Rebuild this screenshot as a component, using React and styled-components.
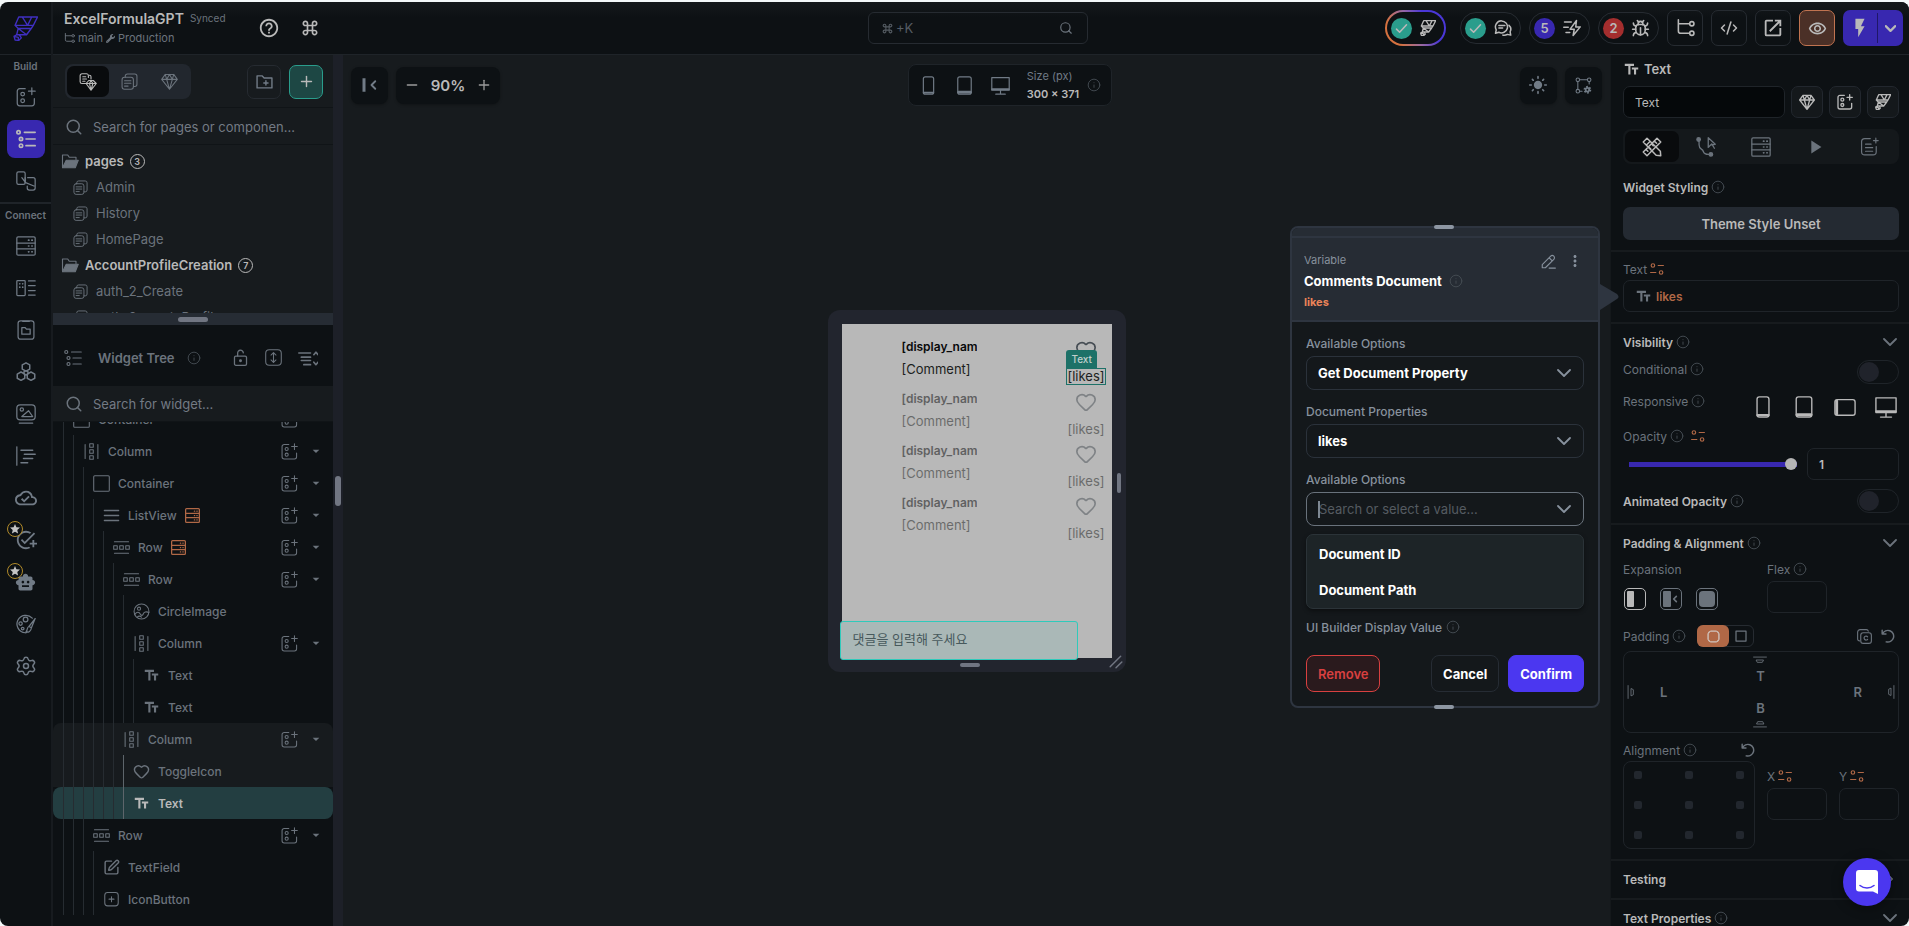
import React, { useState } from 'react';
import styled, { createGlobalStyle, css } from 'styled-components';
import { Bug, ChevronRight, CodeXml, Heart, Info, Minus, Plus, Search, SquarePen } from 'lucide-react';
import {
  MdAddTask,
  MdArrowDropDown,
  MdFlashOn,
  MdHelpOutline,
  MdKeyboardCommandKey,
  MdLightMode,
  MdMoreVert,
  MdOpenInNew,
  MdOutlineCloudDone,
  MdOutlineRemoveRedEye,
  MdPlayArrow,
  MdSmartToy,
  MdStar,
  MdTextFields,
} from 'react-icons/md';
import { FaWrench } from 'react-icons/fa';

const c = {
  base: '#0d1114',
  raised: '#171b1e',
  border: '#1f2429',
  line: '#262b31',
  slate: '#262c34',
  muted: '#6b737c',
  light: '#b9b9b9',
  purple: '#3828b0',
  teal: '#2a9d8c',
  orange: '#b06846',
};

const GlobalStyle = createGlobalStyle`
  * { box-sizing: border-box; }
  body {
    margin: 0;
    background: #f3f8f9;
    color: ${c.muted};
    font-family: Inter, "Noto Sans CJK KR", sans-serif;
    font-size: 13px;
    overflow: hidden;
  }
  button, input, select { font: inherit; color: inherit; margin: 0; }
  button { cursor: pointer; padding: 0; border: none; background: none; }
  a { color: inherit; text-decoration: none; }
  ul { list-style: none; margin: 0; padding: 0; }
  svg { display: block; flex: none; }
`;

/* ---------- Icons ---------- */

const Svg = ({ size = 20, box = 24, sw = 1.5, children, ...rest }) => (
  <svg
    width={size}
    height={size}
    viewBox={`0 0 ${box} ${box}`}
    fill="none"
    stroke="currentColor"
    strokeWidth={sw}
    strokeLinecap="round"
    strokeLinejoin="round"
    aria-hidden="true"
    {...rest}
  >
    {children}
  </svg>
);

const FlowLogo = (props) => (
  <Svg sw={1.3} {...props}>
    <path d="M5.500 1H23.500l-4 8H2zM9 1l5 8 4-8M2 9l3 3h12.500l2-3M5 12l-1.500 6H13l4.500-6M5 12l8 6M3.500 18 1 19.500l1 3.500 3.500.5L8 21l-2-3M1 19.500l4 1 .5 3" />
  </Svg>
);
const AddWidgetIcon = (props) => (
  <Svg {...props}>
    <path d="M11 2H4.500A3 3 0 0 0 1.500 5v14.500a3 3 0 0 0 3 3H19a3 3 0 0 0 3-3V14M19 1v8M15 5h8" />
    <circle cx="8" cy="8.500" r="2.200" />
    <circle cx="8" cy="16.500" r="2.200" />
  </Svg>
);
const TreeIcon = (props) => (
  <Svg sw={2} {...props}>
    <circle cx="3" cy="4" r="2" />
    <circle cx="6" cy="12" r="2" />
    <circle cx="6" cy="20" r="2" />
    <path d="M10 4h13M12 12h11M12 20h11" />
  </Svg>
);
const StoryboardIcon = (props) => (
  <Svg {...props}>
    <rect x="1" y="1" width="10" height="15" rx="2" />
    <path d="M14 8h6.500A2.500 2.500 0 0 1 23 10.500v10a2.500 2.500 0 0 1-2.500 2.500H16a2.500 2.500 0 0 1-2.500-2.500V18M7 8l4.500 6 10 4M11 8v6" />
  </Svg>
);
const DatabaseIcon = (props) => (
  <Svg {...props}>
    <rect x="1" y="1" width="22" height="22" rx="1.500" />
    <path d="M1 8.500h22M1 15.500h22" />
    <path d="M15 5h.5M19 5h.5M15 12h.5M19 12h.5M15 19h.5M19 19h.5" strokeWidth="2" />
  </Svg>
);
const DataTypeIcon = (props) => (
  <Svg {...props}>
    <rect x="1" y="3" width="10" height="18" rx="1" />
    <path d="M4.500 7h.1M8 7h.1M4.500 11h.1M8 11h.1" strokeWidth="2" />
    <path d="M15 3.500h8M15 9h8M15 15h8M15 20.500h8" />
  </Svg>
);
const ClipboardIcon = (props) => (
  <Svg {...props}>
    <rect x="2.500" y="1" width="19" height="22" rx="3" />
    <path d="M8 1.500h8M7 9h4l1.500 2H17v6H7z" />
  </Svg>
);
const ApiIcon = (props) => (
  <Svg sw={1.800} {...props}>
    <path d="m12 1 4.500 2.500v5L12 11 7.500 8.500v-5zM6 12l4.500 2.500v5L6 22l-4.500-2.500v-5zM18 12l-4.500 2.500v5L18 22l4.500-2.500v-5z" />
    <circle cx="12" cy="13" r="2.500" />
  </Svg>
);
const MediaIcon = (props) => (
  <Svg {...props}>
    <rect x="1" y="1" width="22" height="18" rx="4" />
    <circle cx="7" cy="6.500" r="2" />
    <path d="m7 15 8-7 5 7zM4 23h16" />
  </Svg>
);
const CodeLinesIcon = (props) => (
  <Svg {...props}>
    <path d="M1 1v22" />
    <path d="M6 5h14M10 10h13M9 15h11M6 20h8" strokeWidth="1.800" />
  </Svg>
);
const PaletteIcon = (props) => (
  <Svg {...props}>
    <path d="M19.500 5A10.500 10.500 0 1 0 11 22.500c2 0 2.500-1 2-2.500M23 5.500l-4.500 11-3-1.500zM15.500 15c-2.500.5-1.500 4.500-3.500 6.500 3 1 6-1 6.500-5" />
    <circle cx="11.500" cy="6.500" r="2.800" />
    <circle cx="5.500" cy="11.500" r="2" />
    <circle cx="8" cy="17.500" r="1.600" />
  </Svg>
);
const GearIcon = (props) => (
  <Svg sw={1.800} {...props}>
    <path d="M9.500 3.500C10 1 14 1 14.500 3.500c.5 2 2 2.800 3.800 2C21 4.500 23.500 7.500 21.500 9.500c-1.500 1.500-1.500 3.500 0 5 2 2-.5 5-3.200 4-1.800-.8-3.300 0-3.800 2-.5 2.500-4.500 2.500-5 0-.5-2-2-2.800-3.800-2-2.700 1-5.200-2-3.200-4 1.500-1.500 1.500-3.500 0-5-2-2 .5-5 3.200-4 1.800.8 3.300 0 3.800-2z" />
    <circle cx="12" cy="12" r="3" />
  </Svg>
);
const PagesIcon = (props) => (
  <Svg {...props}>
    <rect x="1.500" y="6" width="16" height="17" rx="3.500" />
    <path d="M6 6V4.500A3 3 0 0 1 9 1.500h10.500a3 3 0 0 1 3 3V16a3 3 0 0 1-3 3h-2M5 11h9M5 14.500h9M5 18.500h5" />
  </Svg>
);
const GemIcon = (props) => (
  <Svg {...props}>
    <path d="M6 2h12l5 7-11 14L1 9zM1 9h22M8 9l4 14 4-14-4-7zM6 2l2 7M18 2l-2 7" />
  </Svg>
);
const PagesGemIcon = (props) => (
  <Svg {...props}>
    <path d="M9 14H4a2.500 2.500 0 0 1-2.500-2.500v-8A2.500 2.500 0 0 1 4 1h6a2.500 2.500 0 0 1 2.500 2.500V6M5 5h4M5 8h5M5 11h3M14 3a2 2 0 0 1 2 2v3" />
    <path d="M13 10h6l4 4-7 9-6.500-9zM9.500 14H23M14 14l2 9 2.500-9-2.500-4z" />
  </Svg>
);
const FolderPlusIcon = (props) => (
  <Svg {...props}>
    <path d="M1.500 4h7l3 3h11v14h-21zM14 11v6M11 14h6" />
  </Svg>
);
const FolderIcon = (props) => (
  <Svg {...props}>
    <path d="M2 20V4h7l2 3h9v3" />
    <path d="M7 11h16l-4 10H2z" fill="currentColor" />
  </Svg>
);
const LockIcon = (props) => (
  <Svg sw={1.800} {...props}>
    <rect x="3.500" y="10" width="17" height="13" rx="2" />
    <path d="M8 10V6a4 4 0 0 1 8-.5" />
    <circle cx="12" cy="16.500" r="1.200" fill="currentColor" />
  </Svg>
);
const ExpandIcon = (props) => (
  <Svg {...props}>
    <rect x="1" y="1" width="22" height="22" rx="5" />
    <path d="M12 5v14M8.500 8.500 12 5l3.500 3.500M8.500 15.500 12 19l3.500-3.500" />
  </Svg>
);
const CollapseIcon = (props) => (
  <Svg sw={2} {...props}>
    <path d="M1 6h14M4 11h11M4 15h11M7 20h8M19 8l2.500-3L24 8M19 17l2.500 3 2.500-3" />
  </Svg>
);
const ColumnIcon = (props) => (
  <Svg {...props}>
    <path d="M3 2v20M21 2v20" />
    <path d="M9.500 1h5v5h-5zM9.500 9.500h5v5h-5zM9.500 18h5v5h-5z" />
  </Svg>
);
const RowIcon = (props) => (
  <Svg {...props}>
    <path d="M2 4h20M2 20h20" />
    <path d="M1 9.500h5v5H1zM9.500 9.500h5v5h-5zM18 9.500h5v5h-5z" />
  </Svg>
);
const ContainerIcon = (props) => (
  <Svg {...props}>
    <rect x="1" y="1" width="22" height="22" rx="1.500" />
  </Svg>
);
const ListIcon = (props) => (
  <Svg sw={2} {...props}>
    <path d="M2 5h20M2 12h20M2 19h20" />
  </Svg>
);
const CircleImageIcon = (props) => (
  <Svg {...props}>
    <circle cx="12" cy="12" r="10.500" />
    <circle cx="8.500" cy="8" r="2.200" />
    <path d="M2.500 16c3-4 6-4 8 0 1 2 3 2 4-.5s4-4 8-2M6 20c2-2 4-2 6 0" />
  </Svg>
);
const BoxPlusIcon = (props) => (
  <Svg {...props}>
    <rect x="2.500" y="2" width="19" height="19" rx="4" />
    <path d="M12 8v7M8.500 11.500h7" />
  </Svg>
);
const HeartIcon = (props) => <Heart {...props} strokeWidth={2} />;
const EditBoxIcon = (props) => <SquarePen {...props} strokeWidth={2} />;
const BranchIcon = (props) => (
  <Svg {...props}>
    <path d="M3 1v14a3 3 0 0 0 3 3h11M3 6h14" />
    <circle cx="20" cy="6" r="2.700" />
    <circle cx="20" cy="18" r="2.700" />
  </Svg>
);
const ChatIcon = (props) => (
  <Svg sw={2} {...props}>
    <path d="M10 2.500a8 8 0 1 1-3.500 15.200L2 19l1-4.500A8 8 0 0 1 10 2.500zM6.500 8.500h8M6.500 12h5" />
    <path d="M20 8.500a7 7 0 0 1 1.500 8.500l.8 4.500-4.500-1a8 8 0 0 1-6 1" />
  </Svg>
);
const SpeedBoltIcon = (props) => (
  <Svg sw={2} {...props}>
    <path d="M18 2 9.500 13.500H15L13.500 22 23 10.500h-6zM2 4h9M1 11h6M4 18h5" />
  </Svg>
);
const CollapseLeftIcon = (props) => (
  <Svg {...props}>
    <path d="M4 3v18" strokeWidth="4" strokeLinecap="butt" />
    <path d="m19 7-5 5 5 5" strokeWidth="2.500" />
  </Svg>
);
const PhoneIcon = (props) => (
  <Svg {...props}>
    <rect x="5.500" y="1" width="13" height="22" rx="2.500" />
    <path d="M6 21h12" strokeWidth="2.500" />
  </Svg>
);
const TabletIcon = (props) => (
  <Svg {...props}>
    <rect x="3.500" y="1" width="17" height="22" rx="2.500" />
    <path d="M4.500 20.500h15" strokeWidth="3.500" />
  </Svg>
);
const LandscapeIcon = (props) => (
  <Svg {...props}>
    <rect x="1" y="4" width="22" height="17" rx="2.500" />
    <path d="M3 5.500v14" strokeWidth="3" />
  </Svg>
);
const DesktopIcon = (props) => (
  <Svg {...props}>
    <path d="M1 2h22v16H1zM12 18v4M6 23h12" />
    <path d="M1.500 16.800h21" strokeWidth="2.500" />
  </Svg>
);
const NodesIcon = (props) => (
  <Svg {...props}>
    <circle cx="4" cy="4" r="2.500" />
    <circle cx="20" cy="4" r="2.500" />
    <circle cx="4" cy="20" r="2.500" />
    <path d="M6.500 4h11M4 6.500v11M20 6.500V10M6.500 20H10" />
    <circle cx="17.500" cy="18" r="4" strokeDasharray="2.200 2" strokeLinecap="butt" strokeWidth="3" />
    <circle cx="17.500" cy="18" r="2.500" strokeWidth="2.500" />
  </Svg>
);
const ToolsIcon = (props) => (
  <Svg sw={1.8} {...props}>
    <path d="m1.500 6 4.500-4.500L22 17l.5 5.500-5.500-.5zM22.500 6 18 1.500 1.500 18 6 22.500zM6 9l3-3M15 5l2.500 2.500M11.500 8.500l2 2M8 12l2.500 2.500M5 15l2 2" />
  </Svg>
);
const ActionsIcon = (props) => (
  <Svg {...props}>
    <circle cx="3" cy="4" r="2" fill="currentColor" />
    <circle cx="17" cy="21" r="2" fill="currentColor" />
    <path d="M3.500 6v4c0 6 4 4 5 8 .5 2 2 3 6 3M14 2v11l3-3 5-.5zM18 9l3 5" />
  </Svg>
);
const NoteIcon = (props) => (
  <Svg {...props}>
    <path d="M13 2H6a4 4 0 0 0-4 4v12.500a4 4 0 0 0 4 4h10.500a4 4 0 0 0 4-4V12M20 1.500v6M17 4.500h6M7 9h7M7 13.500h9M7 18h9" />
  </Svg>
);
const BindIcon = (props) => (
  <Svg sw={2} {...props}>
    <circle cx="5" cy="6" r="3" />
    <circle cx="19" cy="18" r="3" />
    <path d="M14 6h9M1 18h9" />
  </Svg>
);
const CopyIcon = (props) => (
  <Svg sw={1.800} {...props}>
    <rect x="6" y="6" width="17" height="17" rx="4" />
    <path d="M4 19a3 3 0 0 1-3-3V5a4 4 0 0 1 4-4h10a3 3 0 0 1 3 2.500M17 12.500a3.200 3.200 0 1 0 0 4" />
  </Svg>
);
const EdgeIcon = (props) => (
  <Svg size={14} {...props}>
    <path d="M1 7h22M6 12h12l-2 4H8z" />
  </Svg>
);
const PencilIcon = (props) => (
  <Svg {...props}>
    <path d="M2 22v-5L15.500 3.500a3.500 3.500 0 0 1 5 5L7 22zM13 6l5 5M13 22.500h10" />
  </Svg>
);
const UndoIcon = () => (
  <Svg size={14} sw={2.500}>
    <path d="M2 2v6.500h6.500M2.500 8.500A10 10 0 1 1 9 22" />
  </Svg>
);
const Chevron = (props) => (
  <Svg size={14} box={14} sw={1.800} {...props}>
    <path d="m1 4 6 6 6-6" />
  </Svg>
);
const Check = () => (
  <Svg size={15} sw={2.5}>
    <path d="m4 13 5 5L20 6" />
  </Svg>
);
const MessengerIcon = () => (
  <svg width="22" height="24" viewBox="0 0 22 24" aria-hidden="true">
    <path d="M3 0h16a3 3 0 0 1 3 3v21l-5-2.500H3a3 3 0 0 1-3-3V3a3 3 0 0 1 3-3z" fill="#fff" />
    <path d="M4 15.500c4 3.300 10 3.300 14 0" fill="none" stroke="#4b37f0" strokeWidth="1.600" strokeLinecap="round" />
  </svg>
);

/* ---------- Page shell ---------- */

const Shell = styled.div`
  display: flex;
  margin-top: 2px;
  height: calc(100vh - 2px);
  background: ${c.base};
  border-radius: 8px;
  overflow: hidden;
`;

const Main = styled.div`
  flex: 1;
  min-width: 0;
  display: flex;
  flex-direction: column;
`;

const Workspace = styled.div`
  flex: 1;
  min-height: 0;
  display: flex;
`;

/* ---------- Rail ---------- */

const Rail = styled.nav`
  width: 53px;
  flex: none;
  border-right: 2px solid #171b1f;
`;

const LogoLink = styled.a`
  height: 53px;
  display: grid;
  place-items: center;
  color: #3f2fc0;
  border-bottom: 1px solid ${c.border};
`;

const RailGroup = styled.section`
  display: flex;
  flex-direction: column;
  align-items: center;
  gap: 4px;
  padding: 3px 0 2px;
  & + & {
    border-top: 2px solid ${c.border};
  }
`;

const RailTitle = styled.h2`
  margin: 0;
  font-size: 10px;
  line-height: 16px;
  font-weight: 600;
`;

const RailItem = styled.button`
  position: relative;
  width: 38px;
  height: 38px;
  display: grid;
  place-items: center;
  border-radius: 8px;
  background: ${({ $active }) => ($active ? c.purple : 'transparent')};
  color: ${({ $active }) => ($active ? c.light : '#717b86')};
`;

const StarBadge = styled.span`
  position: absolute;
  left: 0;
  top: 0;
  width: 16px;
  height: 16px;
  display: grid;
  place-items: center;
  border: 1px solid #b08a2a;
  border-radius: 50%;
  background: ${c.base};
  color: #c4c4c4;
`;

/* ---------- Top bar ---------- */

const TopBar = styled.header`
  height: 53px;
  flex: none;
  display: grid;
  grid-template-columns: 1fr 220px 1fr;
  align-items: center;
  padding-right: 6px;
  background: linear-gradient(#14181b, ${c.base} 16px);
  border-bottom: 1px solid ${c.border};
`;

const ProjectArea = styled.div`
  display: flex;
  align-items: center;
  gap: 20px;
  padding-left: 11px;
  color: ${c.light};
`;

const Project = styled.div`
  width: 174px;
  color: ${c.muted};
`;

const ProjectLine = styled.div`
  display: flex;
  align-items: center;
  gap: ${({ $gap }) => $gap}px;
  height: 20px;
  font-size: ${({ $size }) => $size}px;
  white-space: nowrap;
`;

const ProjectName = styled.h1`
  margin: 0;
  font-size: 14px;
  font-weight: 600;
  color: ${c.light};
`;

const CommandSearch = styled.label`
  display: flex;
  align-items: center;
  gap: 2px;
  height: 32px;
  padding: 0 14px 0 12px;
  border: 1px solid ${c.line};
  border-radius: 6px;
`;

const BareInput = styled.input`
  flex: 1;
  min-width: 0;
  padding: 0;
  border: none;
  outline: none;
  background: none;
  color: ${c.light};
  text-overflow: ellipsis;
  &::placeholder {
    color: ${({ $hint }) => $hint || '#737a84'};
    opacity: 1;
  }
`;

const TopActions = styled.div`
  display: flex;
  align-items: center;
  justify-content: flex-end;
  gap: 8px;
  color: ${c.light};
`;

const Pill = styled.button`
  display: flex;
  align-items: center;
  justify-content: space-between;
  width: 61px;
  height: 32px;
  padding: 0 8px 0 4px;
  border: 1px solid ${c.line};
  border-radius: 16px;
  ${({ $glow }) =>
    $glow &&
    css`
      height: 36px;
      margin-right: 6px;
      border: 2px solid transparent;
      border-radius: 18px;
      background: linear-gradient(${c.base}, ${c.base}) padding-box,
        linear-gradient(60deg, #d5713f 20%, #9a6aa0 45%, #4a37d8 70%) border-box;
    `}
`;

const Count = styled.span`
  width: 21px;
  height: 21px;
  display: grid;
  place-items: center;
  border-radius: 50%;
  background: ${({ $color }) => $color};
  font-weight: 600;
`;

const SquareButton = styled.button`
  width: 36px;
  height: 36px;
  flex: none;
  display: grid;
  place-items: center;
  border: 1px solid ${({ $active }) => ($active ? '#c07350' : c.line)};
  border-radius: 7px;
  background: ${({ $active }) => ($active ? '#4b3027' : 'transparent')};
`;

const RunGroup = styled.div`
  display: flex;
  height: 36px;
  border-radius: 7px;
  background: ${c.purple};
`;

const RunButton = styled.button`
  width: ${({ $width }) => $width}px;
  margin: 3px 0;
  display: grid;
  place-items: center;
  & + & {
    border-left: 1px solid #1f1768;
  }
`;

/* ---------- Left panel ---------- */

const LeftPanel = styled.aside`
  width: 280px;
  flex: none;
  display: flex;
  flex-direction: column;
`;

const PagesPane = styled.section`
  height: 258px;
  flex: none;
  background: ${c.raised};
  overflow: hidden;
`;

const PagesHeader = styled.div`
  display: flex;
  align-items: center;
  gap: 8px;
  height: 53px;
  padding: 1px 10px 0 12px;
  border-bottom: 1px solid #101417;
`;

const Segmented = styled.div`
  display: flex;
  height: 35px;
  margin-right: auto;
  padding: 2px;
  border-radius: 8px;
  background: #22272e;
`;

const Segment = styled.button`
  width: ${({ $active }) => ($active ? 42 : 40)}px;
  display: grid;
  place-items: center;
  border-radius: 7px;
  background: ${({ $active }) => ($active ? '#090b0d' : 'transparent')};
  color: ${({ $active }) => ($active ? c.light : c.muted)};
`;

const ToolButton = styled.button`
  width: 34px;
  height: 34px;
  display: grid;
  place-items: center;
  border: 1px solid ${({ $accent }) => ($accent ? c.teal : c.line)};
  border-radius: 7px;
  background: ${({ $accent }) => ($accent ? '#1d4744' : 'transparent')};
  color: ${({ $accent }) => ($accent ? c.light : '#717b86')};
`;

const SearchRow = styled.label`
  display: flex;
  align-items: center;
  gap: 10px;
  height: ${({ $height }) => $height}px;
  flex: none;
  padding: 1px 32px 0 12px;
  background: ${c.raised};
  border-bottom: 1px solid #101417;
`;

const PageList = styled.ul`
  padding-top: 3px;
`;

const PageRow = styled.li`
  display: flex;
  align-items: center;
  height: 26px;
  gap: ${({ $folder }) => ($folder ? 6 : 8)}px;
  padding-left: ${({ $folder }) => ($folder ? 8 : 20)}px;
  font-weight: ${({ $folder }) => ($folder ? 600 : 400)};
  white-space: nowrap;
`;

const FolderName = styled.span`
  color: ${c.light};
`;

const PageCount = styled.span`
  width: 15px;
  height: 15px;
  display: grid;
  place-items: center;
  border: 1px solid ${c.light};
  border-radius: 50%;
  color: ${c.light};
  font-size: 9px;
`;

const Splitter = styled.div`
  height: 12px;
  flex: none;
  display: grid;
  place-items: center;
  background: ${c.slate};
`;

const Grip = styled.span`
  width: ${({ $w }) => $w}px;
  height: ${({ $h }) => $h}px;
  border-radius: 3px;
  background: ${({ $color }) => $color || '#717682'};
`;

const TreeHeader = styled.div`
  display: flex;
  align-items: center;
  height: 61px;
  flex: none;
  padding: 4px 15px 0 11px;
  gap: 16px;
`;

const TreeTitle = styled.h2`
  display: flex;
  align-items: center;
  gap: 12px;
  margin: 0 auto 0 0;
  font-size: 13px;
  font-weight: 600;
`;

const TreeViewport = styled.div`
  flex: 1;
  min-height: 0;
  overflow: hidden;
  & > ul {
    margin-top: -19px;
  }
`;

const TreeRow = styled.li`
  display: flex;
  align-items: center;
  height: 32px;
  padding: 0 9px 0 10px;
  font-size: 12px;
  font-weight: 500;
  white-space: nowrap;
  ${({ $group }) => $group && `background: ${c.raised};`}
  ${({ $first }) => $first && 'border-radius: 8px 8px 0 0;'}
  ${({ $selected }) =>
    $selected &&
    css`
      background: #233e41;
      border-radius: 8px;
      color: ${c.light};
      font-weight: 600;
    `}
`;

const Guide = styled.span`
  width: 10px;
  height: 32px;
  flex: none;
  border-left: 1px solid ${({ $bright }) => ($bright ? '#5d656b' : '#262c31')};
`;

const TreeLabel = styled.span`
  display: flex;
  align-items: center;
  gap: 8px;
  margin-right: auto;
`;

const TreeAction = styled.button`
  display: flex;
  align-items: center;
  gap: 10px;
`;

const DataMark = styled.span`
  color: ${c.orange};
`;

const Gutter = styled.div`
  width: 10px;
  flex: none;
  display: grid;
  place-items: center;
  background: #1d2028;
`;

/* ---------- Canvas ---------- */

const Canvas = styled.main`
  flex: 1;
  min-width: 0;
  display: grid;
  background: ${c.raised};
  & > * {
    grid-area: 1 / 1;
  }
`;

const CanvasTools = styled.div`
  align-self: start;
  display: flex;
  align-items: center;
  justify-content: space-between;
  padding: 9px 8px;
`;

const ToolGroup = styled.div`
  display: flex;
  gap: 8px;
`;

const Chip = styled.div`
  display: flex;
  align-items: center;
  justify-content: center;
  gap: 11px;
  min-width: ${({ $wide }) => ($wide ? 104 : 37)}px;
  height: 37px;
  border-radius: 8px;
  background: ${c.base};
  box-shadow: 0 1px 3px rgba(0, 0, 0, 0.3);
  color: #717b86;
`;

const ZoomButton = styled.button`
  color: #9a9a9a;
`;

const ZoomValue = styled.output`
  font-size: 15px;
  font-weight: 600;
  color: ${c.light};
`;

const DeviceBar = styled.div`
  display: flex;
  align-items: center;
  gap: 17px;
  height: 42px;
  padding: 0 10px;
  border: 1px solid ${c.border};
  border-radius: 8px;
  background: ${c.base};
  color: #717b86;
`;

const SizeInfo = styled.div`
  font-size: 11px;
  line-height: 18px;
  margin-right: -9px;
  strong {
    display: block;
    font-weight: 600;
    color: ${c.light};
  }
`;

const Frame = styled.div`
  place-self: center;
  position: relative;
  padding: 14px;
  border-radius: 12px;
  background: #22252e;
`;

const Screen = styled.div`
  display: flex;
  flex-direction: column;
  justify-content: space-between;
  width: 270px;
  height: 334px;
  background: #b8b8b8;
`;

const Comment = styled.div`
  display: flex;
  justify-content: space-between;
  height: 52px;
  padding: 0 7px 0 60px;
  font-size: 13px;
  color: #1c1e20;
  opacity: ${({ $faded }) => ($faded ? 0.5 : 1)};
`;

const CommentList = styled.div`
  padding-top: 11px;
`;

const CommentText = styled.div`
  width: 75px;
  overflow: hidden;
  line-height: 23px;
  white-space: nowrap;
  strong {
    display: block;
    font-weight: 600;
    font-size: 12px;
    color: #08090a;
  }
`;

const LikeColumn = styled.div`
  display: flex;
  flex-direction: column;
  align-items: center;
  justify-content: space-between;
  padding: 4px 0 2px;
  line-height: 15px;
`;

const SelectedWidget = styled.span`
  position: relative;
  margin-bottom: 1px;
  outline: 1px solid #1d7168;
`;

const WidgetTag = styled.span`
  position: absolute;
  left: -1px;
  bottom: 15px;
  padding: 0 5px;
  border-radius: 3px 3px 0 0;
  background: #1d7168;
  color: #c0cfcd;
  font-size: 10px;
  font-weight: 500;
  line-height: 19px;
`;

const CommentField = styled.input`
  width: 238px;
  height: 39px;
  margin: 0 0 -2px -2px;
  padding: 0 12px 2px;
  border: 1px solid #2fcabb;
  border-radius: 3px;
  background: #aab8b7;
  &::placeholder {
    color: #47595c;
    opacity: 1;
  }
`;

const SideGrip = styled(Grip)`
  position: absolute;
  right: 5px;
  top: 163px;
`;

const BottomGrip = styled(Grip)`
  position: absolute;
  left: 132px;
  bottom: 5px;
`;

const Corner = styled.span`
  position: absolute;
  right: 3px;
  bottom: 3px;
  color: #717682;
`;

/* ---------- Variable dialog ---------- */

const Dialog = styled.section`
  position: fixed;
  top: 226px;
  right: 309px;
  width: 310px;
  border: 2px solid #2e3540;
  border-radius: 8px;
  background: #14181b;
  color: #87919d;
`;

const DialogGrip = styled(Grip)`
  position: absolute;
  left: 142px;
  ${({ $edge }) => $edge}: -3px;
`;

const Pointer = styled.svg`
  position: absolute;
  left: 306px;
  top: 56px;
`;

const DialogHead = styled.header`
  display: flex;
  justify-content: space-between;
  height: 94px;
  padding: 22px 14px 0 12px;
  border-bottom: 2px solid #2e3540;
  border-radius: 6px 6px 0 0;
  background: linear-gradient(${c.slate} 8px, #2e3540 8px, #2e3540 10px, ${c.slate} 10px);
  font-size: 11px;
  line-height: 20px;
`;

const DialogTitle = styled.h2`
  display: flex;
  align-items: center;
  gap: 7px;
  margin: 0;
  height: 22px;
  font-size: 13px;
  font-weight: 700;
  color: #fff;
`;

const DialogValue = styled.div`
  font-weight: 700;
  color: #ea8459;
`;

const DialogTools = styled.div`
  display: flex;
  gap: 10px;
  height: 22px;
  align-items: center;
`;

const DialogBody = styled.form`
  padding: 10px 14px 14px;
`;

const FieldLabel = styled.label`
  display: flex;
  align-items: center;
  gap: 4px;
  height: 24px;
  padding-bottom: 2px;
  font-size: 12px;
  font-weight: 500;
`;

const SelectWrap = styled.div`
  position: relative;
  display: flex;
  align-items: center;
  height: 34px;
  margin-bottom: 10px;
  border: 1px solid ${({ $focused }) => ($focused ? '#69727c' : '#2b323b')};
  border-radius: 8px;
  & > svg {
    position: absolute;
    right: 12px;
    pointer-events: none;
  }
`;

const Select = styled.select`
  appearance: none;
  width: 100%;
  height: 100%;
  padding: 0 11px;
  border: none;
  outline: none;
  background: transparent;
  color: #fff;
  font-weight: 700;
  option {
    background: #14181b;
  }
`;

const Combo = styled(BareInput)`
  padding: 0 12px;
`;

const TextCaret = styled.span`
  position: absolute;
  left: 11px;
  width: 2px;
  height: 17px;
  background: #7e8893;
`;

const Menu = styled.ul`
  height: 75px;
  margin: -2px 0 7px;
  padding: 1px 0;
  border: 1px solid #2b3338;
  border-radius: 7px;
  background: #1d2427;
  box-shadow: 0 2px 4px rgba(0, 0, 0, 0.4);
`;

const MenuItem = styled.li`
  height: 36px;
  padding: 0 12px;
  line-height: 36px;
  font-weight: 700;
  color: #fff;
`;

const DialogActions = styled.div`
  display: flex;
  gap: 9px;
  margin-top: 15px;
`;

const ActionButton = styled.button`
  height: 37px;
  padding: 0 11px;
  border: 1px solid #262c34;
  border-radius: 8px;
  color: #fff;
  font-weight: 700;
  ${({ $kind }) =>
    $kind === 'danger' &&
    css`
      margin-right: auto;
      border-color: #d84040;
      background: #2a1a1d;
      color: #d84040;
      font-weight: 600;
    `}
  ${({ $kind }) =>
    $kind === 'primary' &&
    css`
      border-color: #4b37f0;
      background: #4b37f0;
    `}
`;

/* ---------- Properties panel ---------- */

const Properties = styled.aside`
  width: 299px;
  flex: none;
  border-left: 1px solid #14181b;
  overflow: hidden;
`;

const Section = styled.section`
  padding: ${({ $top }) => ($top === undefined ? 9 : $top)}px 10px 10px 12px;
  border-bottom: 2px solid ${c.raised};
`;

const Line = styled.div`
  display: flex;
  align-items: ${({ $align }) => $align || 'center'};
  gap: ${({ $gap }) => $gap || 0}px;
  height: ${({ $h }) => $h || 18}px;
  margin-top: ${({ $mt }) => $mt || 0}px;
`;

const SectionChevron = styled(Chevron)`
  margin-right: 2px;
`;

const PropTitle = styled.h3`
  display: flex;
  align-items: center;
  gap: 3px;
  margin: 0 auto 0 0;
  font-size: ${({ $small }) => ($small ? 12 : 13)}px;
  font-weight: 600;
  color: ${c.light};
`;

const PropLabel = styled.label`
  display: flex;
  align-items: center;
  gap: 3px;
  margin-right: ${({ $tight }) => ($tight ? '11px' : 'auto')};
  height: 18px;
  font-size: 12px;
  svg:nth-of-type(2) {
    margin-left: 4px;
  }
`;

const InputBox = styled.div`
  display: flex;
  align-items: center;
  gap: 4px;
  width: ${({ $w }) => ($w ? `${$w}px` : 'auto')};
  min-width: 0;
  flex: ${({ $w }) => ($w ? 'none' : 1)};
  height: 32px;
  padding: 0 11px;
  border: 1px solid ${c.border};
  border-radius: 7px;
  background: ${({ $dark }) => ($dark ? '#05080a' : 'transparent')};
`;

const BoundValue = styled(BareInput)`
  color: ${({ $color }) => $color || c.light};
  font-size: 12px;
  font-weight: ${({ $bold }) => ($bold ? 600 : 400)};
`;

const NameButton = styled(SquareButton)`
  width: 32px;
  height: 32px;
  border-color: #22272e;
  background: #14181b;
  color: ${c.light};
`;

const Tabs = styled.div`
  display: flex;
  height: 35px;
  margin-top: 11px;
  padding: 2px;
  border-radius: 8px;
  background: #14181b;
`;

const Tab = styled.button`
  flex: 1;
  display: grid;
  place-items: center;
  border-radius: 7px;
  background: ${({ $active }) => ($active ? '#090b0d' : 'transparent')};
  color: ${({ $active }) => ($active ? c.light : c.muted)};
`;

const ThemeButton = styled.button`
  width: 100%;
  height: 33px;
  margin-top: 11px;
  border-radius: 7px;
  background: #242a32;
  color: ${c.light};
  font-weight: 600;
`;

const Toggle = styled.input`
  appearance: none;
  width: 42px;
  height: 24px;
  padding: 1px;
  border: 1px solid ${c.border};
  border-radius: 12px;
  &::before {
    content: '';
    display: block;
    width: 20px;
    height: 20px;
    border-radius: 50%;
    background: #20232b;
  }
  &:checked::before {
    margin-left: auto;
    background: ${c.light};
  }
`;

const Devices = styled.div`
  display: flex;
  gap: 19px;
  padding: 4px 2px 0 0;
  color: ${c.light};
`;

const Slider = styled.input`
  appearance: none;
  flex: 1;
  min-width: 0;
  height: 12px;
  margin: 0 4px 0 6px;
  background: linear-gradient(${c.purple}, ${c.purple}) center / 100% 5px no-repeat;
  &::-webkit-slider-thumb {
    appearance: none;
    width: 12px;
    height: 12px;
    border-radius: 50%;
    background: #b5b5b5;
  }
`;

const HalfRow = styled.div`
  display: grid;
  grid-template-columns: 132px 60px 60px;
  column-gap: 12px;
`;

const Expansions = styled.div`
  display: flex;
  align-items: center;
  gap: 14px;
  height: 32px;
  padding: 4px 0 0 1px;
`;

const Expansion = styled.button`
  width: 22px;
  height: 22px;
  padding: 2px;
  display: flex;
  align-items: center;
  border: 1px solid currentColor;
  border-radius: 5px;
  color: ${({ $active }) => ($active ? c.light : c.muted)};
  &::before {
    content: '';
    width: ${({ $fill }) => $fill}px;
    height: 16px;
    border-radius: ${({ $fill }) => ($fill > 10 ? 4 : 1)}px;
    background: currentColor;
  }
`;

const PaddingMode = styled.div`
  display: flex;
  height: 22px;
  border: 1px solid ${c.line};
  border-radius: 6px;
`;

const ModeButton = styled.button`
  width: ${({ $active }) => ($active ? 32 : 27)}px;
  margin: -1px;
  display: grid;
  place-items: center;
  border-radius: 6px;
  background: ${({ $active }) => ($active ? c.orange : 'transparent')};
  color: ${({ $active }) => ($active ? '#d0c4be' : c.muted)};
`;

const IconButtons = styled.div`
  display: flex;
  align-items: center;
  gap: 9px;
  margin: 0 4px 0 auto;
`;

const PaddingBox = styled.div`
  display: flex;
  align-items: center;
  justify-content: space-between;
  height: 82px;
  margin-top: 4px;
  padding: 1px 0;
  border: 1px solid ${c.border};
  border-radius: 8px;
  font-weight: 600;
  font-size: 13px;
`;

const SideInput = styled.div`
  display: flex;
  align-items: center;
  gap: 22px;
`;

const MidInputs = styled.div`
  display: flex;
  flex-direction: column;
  align-items: center;
  height: 100%;
  line-height: 18px;
  span + span {
    margin-top: auto;
  }
`;

const AlignBox = styled.div`
  display: grid;
  grid-template-columns: repeat(3, 8px);
  justify-content: space-between;
  align-content: space-between;
  height: 88px;
  padding: 9px 10px;
  border: 1px solid ${c.border};
  border-radius: 8px;
`;

const AlignDot = styled.button`
  width: 8px;
  height: 8px;
  border-radius: 2px;
  background: #22272e;
`;

const ChatButton = styled.button`
  position: fixed;
  right: 18px;
  bottom: 20px;
  width: 48px;
  height: 48px;
  display: grid;
  place-items: center;
  border-radius: 50%;
  background: #4b37f0;
  box-shadow: 0 2px 12px rgba(0, 0, 0, 0.4);
`;

/* ---------- Data ---------- */

const buildItems = [
  { name: 'Widget palette', icon: AddWidgetIcon },
  { name: 'Widget tree', icon: TreeIcon },
  { name: 'Storyboard', icon: StoryboardIcon },
];

const connectItems = [
  { name: 'Firestore', icon: DatabaseIcon },
  { name: 'Data types', icon: DataTypeIcon },
  { name: 'App values', icon: ClipboardIcon },
  { name: 'API calls', icon: ApiIcon },
  { name: 'Media assets', icon: MediaIcon },
  { name: 'Custom code', icon: CodeLinesIcon },
  { name: 'Cloud functions', icon: MdOutlineCloudDone, size: 22 },
  { name: 'Tests', icon: MdAddTask, star: true, size: 22 },
  { name: 'Agents', icon: MdSmartToy, star: true, size: 21 },
  { name: 'Theme', icon: PaletteIcon },
  { name: 'Settings', icon: GearIcon },
];

const pages = [
  { name: 'pages', count: 3 },
  { name: 'Admin' },
  { name: 'History' },
  { name: 'HomePage' },
  { name: 'AccountProfileCreation', count: 7 },
  { name: 'auth_2_Create' },
  { name: 'auth_2_createProfile' },
];

const treeNodes = [
  { name: 'Container', icon: ContainerIcon, depth: 1, parent: true },
  { name: 'Column', icon: ColumnIcon, depth: 2, parent: true },
  { name: 'Container', icon: ContainerIcon, depth: 3, parent: true },
  { name: 'ListView', icon: ListIcon, depth: 4, parent: true, data: true },
  { name: 'Row', icon: RowIcon, depth: 5, parent: true, data: true },
  { name: 'Row', icon: RowIcon, depth: 6, parent: true },
  { name: 'CircleImage', icon: CircleImageIcon, depth: 7 },
  { name: 'Column', icon: ColumnIcon, depth: 7, parent: true },
  { name: 'Text', icon: MdTextFields, depth: 8 },
  { name: 'Text', icon: MdTextFields, depth: 8 },
  { name: 'Column', icon: ColumnIcon, depth: 6, parent: true, group: true, first: true },
  { name: 'ToggleIcon', icon: HeartIcon, depth: 7, group: true },
  { name: 'Text', icon: MdTextFields, depth: 7, group: true, selected: true },
  { name: 'Row', icon: RowIcon, depth: 3, parent: true },
  { name: 'TextField', icon: EditBoxIcon, depth: 4 },
  { name: 'IconButton', icon: BoxPlusIcon, depth: 4 },
];

const InfoMark = () => <Info size={14} strokeWidth={1.6} color="#454c53" />;

const RailButtons = ({ items, activeName }) =>
  items.map(({ name, icon: Icon, star, size = 20 }) => (
    <RailItem key={name} aria-label={name} $active={name === activeName}>
      <Icon size={size} />
      {star && (
        <StarBadge>
          <MdStar size={12} />
        </StarBadge>
      )}
    </RailItem>
  ));

const WidgetTree = () => (
  <ul>
    {treeNodes.map((node, i) => {
      const Icon = node.icon;
      return (
        <TreeRow key={i} $group={node.group} $first={node.first} $selected={node.selected}>
          {Array.from({ length: node.depth }, (_, g) => (
            <Guide key={g} $bright={node.group && g === 6} />
          ))}
          <TreeLabel>
            <Icon size={17} />
            {node.name}
            {node.data && (
              <DataMark>
                <DatabaseIcon size={15} sw={2} />
              </DataMark>
            )}
          </TreeLabel>
          {node.parent && (
            <TreeAction aria-label={`Add to ${node.name}`}>
              <AddWidgetIcon size={17} />
              <MdArrowDropDown size={16} />
            </TreeAction>
          )}
        </TreeRow>
      );
    })}
  </ul>
);

const PropertiesPanel = () => {
  const [opacity, setOpacity] = useState(1);
  const [conditional, setConditional] = useState(false);
  const [animated, setAnimated] = useState(false);

  return (
    <Properties>
      <Section $top={0}>
        <Line $h={28} $gap={4}>
          <MdTextFields size={17} color={c.light} />
          <PropTitle>Text</PropTitle>
        </Line>
        <Line $h={32} $mt={3} $gap={6}>
          <InputBox $dark>
            <BoundValue aria-label="Widget name" defaultValue="Text" />
          </InputBox>
          <NameButton aria-label="Make component"><GemIcon size={16} sw={2} /></NameButton>
          <NameButton aria-label="Wrap widget"><AddWidgetIcon size={16} sw={2} /></NameButton>
          <NameButton aria-label="Generate"><FlowLogo size={16} sw={2} /></NameButton>
        </Line>
        <Tabs>
          <Tab $active aria-label="Design"><ToolsIcon /></Tab>
          <Tab aria-label="Actions"><ActionsIcon size={21} /></Tab>
          <Tab aria-label="Backend query"><DatabaseIcon /></Tab>
          <Tab aria-label="Animations"><MdPlayArrow size={22} /></Tab>
          <Tab aria-label="Notes"><NoteIcon size={19} /></Tab>
        </Tabs>
        <Line $mt={14}>
          <PropTitle $small>Widget Styling <InfoMark /></PropTitle>
        </Line>
        <ThemeButton>Theme Style Unset</ThemeButton>
      </Section>

      <Section>
        <Line $h={16}>
          <PropLabel htmlFor="text-value">Text <BindIcon size={14} color={c.orange} /></PropLabel>
        </Line>
        <Line $h={32} $mt={3}>
          <InputBox>
            <MdTextFields size={17} />
            <BoundValue id="text-value" defaultValue="likes" $color={c.orange} $bold />
          </InputBox>
        </Line>
      </Section>

      <Section>
        <Line>
          <PropTitle $small>Visibility <InfoMark /></PropTitle>
          <SectionChevron />
        </Line>
        <Line $h={24} $mt={9} $align="flex-start">
          <PropLabel htmlFor="conditional">Conditional <InfoMark /></PropLabel>
          <Toggle id="conditional" type="checkbox" checked={conditional} onChange={() => setConditional(!conditional)} />
        </Line>
        <Line $h={30} $mt={8} $align="flex-start">
          <PropLabel as="span">Responsive <InfoMark /></PropLabel>
          <Devices>
            <PhoneIcon size={22} />
            <TabletIcon size={22} />
            <LandscapeIcon size={22} />
            <DesktopIcon size={22} />
          </Devices>
        </Line>
        <Line $mt={5}>
          <PropLabel htmlFor="opacity">Opacity <InfoMark /> <BindIcon size={14} color={c.orange} /></PropLabel>
        </Line>
        <Line $h={32} $mt={3} $gap={6}>
          <Slider
            id="opacity"
            type="range"
            min="0"
            max="1"
            step="0.01"
            value={opacity}
            onChange={(e) => setOpacity(e.target.value)}
          />
          <InputBox $w={92}>
            <BoundValue aria-label="Opacity value" value={opacity} onChange={(e) => setOpacity(e.target.value)} $bold />
          </InputBox>
        </Line>
        <Line $h={24} $mt={9}>
          <PropTitle as="label" htmlFor="animated" $small>Animated Opacity <InfoMark /></PropTitle>
          <Toggle id="animated" type="checkbox" checked={animated} onChange={() => setAnimated(!animated)} />
        </Line>
      </Section>

      <Section>
        <Line>
          <PropTitle $small>Padding &amp; Alignment <InfoMark /></PropTitle>
          <SectionChevron />
        </Line>
        <Line $mt={8}>
          <HalfRow>
            <PropLabel as="span">Expansion</PropLabel>
            <PropLabel htmlFor="flex">Flex <InfoMark /></PropLabel>
          </HalfRow>
        </Line>
        <Line $h={32} $mt={3}>
          <HalfRow>
            <Expansions>
              <Expansion $active $fill={7} aria-label="None" />
              <Expansion $fill={8} aria-label="Flexible">
                <Svg size={8} sw={5}><path d="m16 4-8 8 8 8" /></Svg>
              </Expansion>
              <Expansion $fill={16} aria-label="Expanded" />
            </Expansions>
            <InputBox $w={60}><BoundValue id="flex" /></InputBox>
          </HalfRow>
        </Line>
        <Line $h={22} $mt={12}>
          <PropLabel as="span" $tight>Padding <InfoMark /></PropLabel>
          <PaddingMode>
            <ModeButton $active aria-label="Per side">
              <Svg size={13} sw={2.5}><path d="M7 2h10M7 22h10M2 7v10M22 7v10M3 5l2-2M19 3l2 2M3 19l2 2M19 21l2-2" /></Svg>
            </ModeButton>
            <ModeButton aria-label="All sides"><Svg size={12} sw={2.5}><path d="M2 2h20v20H2z" /></Svg></ModeButton>
          </PaddingMode>
          <IconButtons>
            <button aria-label="Copy padding"><CopyIcon size={15} /></button>
            <button aria-label="Reset padding"><UndoIcon /></button>
          </IconButtons>
        </Line>
        <PaddingBox>
          <SideInput><EdgeIcon transform="rotate(-90)" /><span>L</span></SideInput>
          <MidInputs>
            <EdgeIcon />
            <span>T</span>
            <span>B</span>
            <EdgeIcon transform="rotate(180)" />
          </MidInputs>
          <SideInput><span>R</span><EdgeIcon transform="rotate(90)" /></SideInput>
        </PaddingBox>
        <Line $mt={8}>
          <HalfRow>
            <Line>
              <PropLabel as="span">Alignment <InfoMark /></PropLabel>
              <button aria-label="Reset alignment"><UndoIcon /></button>
            </Line>
          </HalfRow>
        </Line>
        <Line $h={88} $mt={2}>
          <HalfRow>
            <AlignBox>
              {Array.from({ length: 9 }, (_, i) => (
                <AlignDot key={i} aria-label={`Align ${i + 1}`} />
              ))}
            </AlignBox>
            {['X', 'Y'].map((axis) => (
              <div key={axis}>
                <Line $mt={6}>
                  <PropLabel htmlFor={`align-${axis}`}>{axis} <BindIcon size={14} color={c.orange} /></PropLabel>
                </Line>
                <Line $h={32} $mt={3}>
                  <InputBox $w={60}><BoundValue id={`align-${axis}`} /></InputBox>
                </Line>
              </div>
            ))}
          </HalfRow>
        </Line>
      </Section>

      <Section>
        <Line>
          <PropTitle $small>Testing</PropTitle>
          <ChevronRight size={18} />
        </Line>
      </Section>
      <Section>
        <Line>
          <PropTitle $small>Text Properties <InfoMark /></PropTitle>
          <SectionChevron />
        </Line>
      </Section>
    </Properties>
  );
};

const VariableDialog = () => (
  <Dialog aria-label="Variable">
    <DialogHead>
      <div>
        <div>Variable</div>
        <DialogTitle>Comments Document <InfoMark /></DialogTitle>
        <DialogValue>likes</DialogValue>
      </div>
      <DialogTools>
        <button aria-label="Edit"><PencilIcon size={15} sw={1.8} /></button>
        <button aria-label="More"><MdMoreVert size={18} /></button>
      </DialogTools>
    </DialogHead>
    <DialogBody onSubmit={(e) => e.preventDefault()}>
      <FieldLabel htmlFor="option-1">Available Options</FieldLabel>
      <SelectWrap>
        <Select id="option-1"><option>Get Document Property</option></Select>
        <Chevron />
      </SelectWrap>
      <FieldLabel htmlFor="option-2">Document Properties</FieldLabel>
      <SelectWrap>
        <Select id="option-2"><option>likes</option></Select>
        <Chevron />
      </SelectWrap>
      <FieldLabel htmlFor="option-3">Available Options</FieldLabel>
      <SelectWrap $focused>
        <Combo id="option-3" placeholder="Search or select a value..." $hint="#555b61" />
        <TextCaret />
        <Chevron />
      </SelectWrap>
      <Menu>
        <MenuItem>Document ID</MenuItem>
        <MenuItem>Document Path</MenuItem>
      </Menu>
      <FieldLabel as="div">UI Builder Display Value <InfoMark /></FieldLabel>
      <DialogActions>
        <ActionButton $kind="danger">Remove</ActionButton>
        <ActionButton>Cancel</ActionButton>
        <ActionButton $kind="primary">Confirm</ActionButton>
      </DialogActions>
    </DialogBody>
    <Pointer width="22" height="26" viewBox="0 0 22 26">
      <path d="M2 0l17 10q3 3 0 5L2 26z" fill="#2e3540" />
    </Pointer>
    <DialogGrip $w={20} $h={4} $edge="top" $color="#8d96a2" />
    <DialogGrip $w={20} $h={4} $edge="bottom" $color="#8d96a2" />
  </Dialog>
);

const App = () => (
  <>
    <GlobalStyle />
    <Shell>
      <Rail>
        <LogoLink href="#" aria-label="Home"><FlowLogo size={25} /></LogoLink>
        <RailGroup>
          <RailTitle>Build</RailTitle>
          <RailButtons items={buildItems} activeName="Widget tree" />
        </RailGroup>
        <RailGroup>
          <RailTitle>Connect</RailTitle>
          <RailButtons items={connectItems} />
        </RailGroup>
      </Rail>

      <Main>
        <TopBar>
          <ProjectArea>
            <Project>
              <ProjectLine $gap={6} $size={10}>
                <ProjectName>ExcelFormulaGPT</ProjectName>
                Synced
              </ProjectLine>
              <ProjectLine $gap={3} $size={11}>
                <BranchIcon size={11} sw={2} /> main <FaWrench size={9} /> Production
              </ProjectLine>
            </Project>
            <MdHelpOutline size={22} />
            <MdKeyboardCommandKey size={20} />
          </ProjectArea>
          <CommandSearch>
            <MdKeyboardCommandKey size={13} color="#555c63" />
            <BareInput placeholder="+K" aria-label="Search commands" $hint="#555c63" />
            <Search size={14} />
          </CommandSearch>
          <TopActions>
            <Pill $glow>
              <Count $color={c.teal}><Check /></Count>
              <FlowLogo size={16} sw={2} />
            </Pill>
            <Pill>
              <Count $color={c.teal}><Check /></Count>
              <ChatIcon size={18} />
            </Pill>
            <Pill>
              <Count $color={c.purple}>5</Count>
              <SpeedBoltIcon size={18} />
            </Pill>
            <Pill>
              <Count $color="#a42e2e">2</Count>
              <Bug size={19} />
            </Pill>
            <SquareButton aria-label="Branches"><BranchIcon size={19} sw={2} /></SquareButton>
            <SquareButton aria-label="View code"><CodeXml size={18} /></SquareButton>
            <SquareButton aria-label="Open preview"><MdOpenInNew size={22} /></SquareButton>
            <SquareButton aria-label="Preview" $active><MdOutlineRemoveRedEye size={19} /></SquareButton>
            <RunGroup>
              <RunButton $width={34} aria-label="Run"><MdFlashOn size={22} /></RunButton>
              <RunButton $width={26} aria-label="Run options"><Chevron size={11} sw={2.8} /></RunButton>
            </RunGroup>
          </TopActions>
        </TopBar>

        <Workspace>
          <LeftPanel>
            <PagesPane>
              <PagesHeader>
                <Segmented>
                  <Segment $active aria-label="All"><PagesGemIcon size={18} /></Segment>
                  <Segment aria-label="Pages"><PagesIcon size={17} /></Segment>
                  <Segment aria-label="Components"><GemIcon size={17} /></Segment>
                </Segmented>
                <ToolButton aria-label="New folder"><FolderPlusIcon size={17} sw={2} /></ToolButton>
                <ToolButton $accent aria-label="New page"><Plus size={17} /></ToolButton>
              </PagesHeader>
              <SearchRow $height={37}>
                <Search size={18} />
                <BareInput placeholder="Search for pages or componen..." aria-label="Search pages" />
              </SearchRow>
              <PageList>
                {pages.map((page) => (
                  <PageRow key={page.name} $folder={!!page.count}>
                    {page.count ? <FolderIcon size={18} /> : <PagesIcon size={15} />}
                    {page.count ? <FolderName>{page.name}</FolderName> : page.name}
                    {page.count && <PageCount>{page.count}</PageCount>}
                  </PageRow>
                ))}
              </PageList>
            </PagesPane>
            <Splitter><Grip $w={30} $h={5} /></Splitter>
            <TreeHeader>
              <TreeIcon size={18} sw={1.6} />
              <TreeTitle>Widget Tree <InfoMark /></TreeTitle>
              <LockIcon size={17} />
              <ExpandIcon size={17} />
              <CollapseIcon size={20} />
            </TreeHeader>
            <SearchRow $height={36}>
              <Search size={18} />
              <BareInput placeholder="Search for widget..." aria-label="Search widget" />
            </SearchRow>
            <TreeViewport><WidgetTree /></TreeViewport>
          </LeftPanel>
          <Gutter><Grip $w={6} $h={30} /></Gutter>

          <Canvas>
            <CanvasTools>
              <ToolGroup>
                <Chip as="button" aria-label="Collapse panel"><CollapseLeftIcon size={18} /></Chip>
                <Chip $wide>
                  <ZoomButton aria-label="Zoom out"><Minus size={16} /></ZoomButton>
                  <ZoomValue>90%</ZoomValue>
                  <ZoomButton aria-label="Zoom in"><Plus size={16} /></ZoomButton>
                </Chip>
              </ToolGroup>
              <DeviceBar>
                <PhoneIcon size={19} />
                <TabletIcon size={19} />
                <DesktopIcon size={19} />
                <SizeInfo>Size (px)<strong>300 × 371</strong></SizeInfo>
                <InfoMark />
              </DeviceBar>
              <ToolGroup>
                <Chip as="button" aria-label="Light mode"><MdLightMode size={20} /></Chip>
                <Chip as="button" aria-label="Canvas settings"><NodesIcon size={17} /></Chip>
              </ToolGroup>
            </CanvasTools>

            <Frame>
              <Screen>
                <CommentList>
                  {[0, 1, 2, 3].map((i) => (
                    <Comment key={i} $faded={i > 0}>
                      <CommentText>
                        <strong>[display_name]</strong>
                        [Comment]
                      </CommentText>
                      <LikeColumn>
                        <Heart size={22} strokeWidth={1.8} color="#464d54" />
                        {i === 0 ? (
                          <SelectedWidget>[likes]<WidgetTag>Text</WidgetTag></SelectedWidget>
                        ) : (
                          <span>[likes]</span>
                        )}
                      </LikeColumn>
                    </Comment>
                  ))}
                </CommentList>
                <CommentField placeholder="댓글을 입력해 주세요" aria-label="댓글" />
              </Screen>
              <SideGrip $w={4} $h={20} />
              <BottomGrip $w={20} $h={4} />
              <Corner><Svg size={14} sw={2.5}><path d="M2 20 20 2M12 22 22 12" /></Svg></Corner>
            </Frame>
          </Canvas>

          <PropertiesPanel />
        </Workspace>
      </Main>
    </Shell>
    <VariableDialog />
    <ChatButton aria-label="Open chat"><MessengerIcon /></ChatButton>
  </>
);

export default App;
